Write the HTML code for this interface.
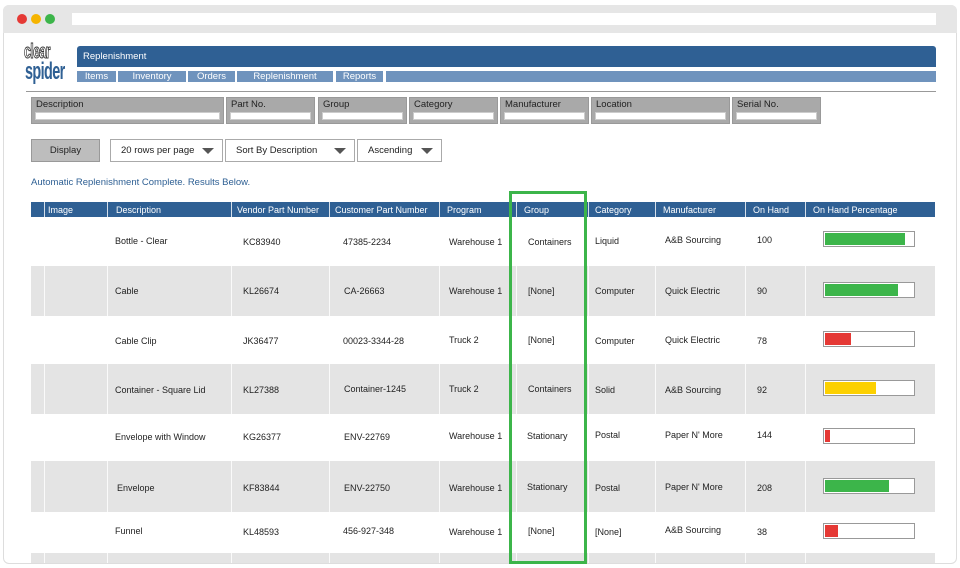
<!DOCTYPE html><html><head><meta charset="utf-8"><style>
*{margin:0;padding:0;box-sizing:border-box}
body{width:960px;height:568px;background:#fff;font-family:"Liberation Sans",sans-serif;position:relative;overflow:hidden;color:#222}
.a{position:absolute}
.frame{left:3px;top:5px;width:954px;height:559px;border:1px solid #ddd;border-radius:6px;background:#fff}
.tb{left:3px;top:5px;width:954px;height:28px;background:#e6e6e6;border-radius:6px 6px 0 0}
.dot{width:10px;height:10px;border-radius:50%;top:14px}
.nav{top:71px;height:11px;background:#6f93bd;color:#fff;font-size:9.5px;line-height:11px;text-align:center}
.fb{top:97px;height:27px;background:#a9a9a9;border:1px solid #999;font-size:9.5px;padding-left:4px;line-height:13px}
.fb i{position:absolute;left:3px;right:3px;top:14px;height:8px;background:#fff;border:1px solid #ccc}
.sel{top:139px;height:23px;border:1px solid #aaa;background:#fff;font-size:9.5px;line-height:21px;padding-left:10px}
.sel b{position:absolute;right:8px;top:8px;width:0;height:0;border-left:6px solid transparent;border-right:6px solid transparent;border-top:6px solid #555}
.th{top:202px;height:15px;background:#2f6094;color:#fff;font-size:9.5px;line-height:15px}
.row{left:31px;width:904px}
.g{background:#e4e4e4}
.vl{top:202px;height:361px;width:1px;background:rgba(255,255,255,.8)}
.t{font-size:9px;white-space:nowrap}
.bar{left:823px;width:92px;height:16px;border:1px solid #999;background:#fff}
.bar i{position:absolute;left:1px;top:1px;bottom:1px}
</style></head><body>
<div class="a frame"></div><div class="a tb"></div>
<div class="a dot" style="left:17px;background:#e53935"></div>
<div class="a dot" style="left:31px;background:#f5b400"></div>
<div class="a dot" style="left:45px;background:#3cb54a"></div>
<div class="a" style="left:72px;top:13px;width:864px;height:12px;background:#fff"></div>
<div class="a" style="left:24px;top:42px;font:bold 20px/20px 'Liberation Sans',sans-serif;color:#fff;-webkit-text-stroke:1px #333;letter-spacing:-1px;transform:scale(.62,1);transform-origin:left top">clear</div>
<div class="a" style="left:25px;top:61px;font:bold 24px/22px 'Liberation Sans',sans-serif;color:#2f6094;letter-spacing:-1px;transform:scale(.6,1);transform-origin:left top">spider</div>
<div class="a" style="left:77px;top:46px;width:859px;height:21px;background:#2f6094;border-radius:3px 3px 0 0;color:#fff;font-size:9.5px;line-height:21px;padding-left:6px">Replenishment</div>
<div class="a nav" style="left:77px;width:39px">Items</div>
<div class="a nav" style="left:118px;width:68px">Inventory</div>
<div class="a nav" style="left:188px;width:47px">Orders</div>
<div class="a nav" style="left:237px;width:96px">Replenishment</div>
<div class="a nav" style="left:336px;width:47px">Reports</div>
<div class="a nav" style="left:386px;width:550px"></div>
<div class="a" style="left:26px;top:91px;width:910px;height:1px;background:#999"></div>
<div class="a fb" style="left:31px;width:193px">Description<i></i></div>
<div class="a fb" style="left:226px;width:89px">Part No.<i></i></div>
<div class="a fb" style="left:318px;width:89px">Group<i></i></div>
<div class="a fb" style="left:409px;width:89px">Category<i></i></div>
<div class="a fb" style="left:500px;width:89px">Manufacturer<i></i></div>
<div class="a fb" style="left:591px;width:139px">Location<i></i></div>
<div class="a fb" style="left:732px;width:89px">Serial No.<i></i></div>
<div class="a" style="left:31px;top:139px;width:69px;height:23px;background:#bdbdbd;border:1px solid #999;font-size:9.5px;line-height:21px;text-align:center">Display</div>
<div class="a sel" style="left:110px;width:113px">20 rows per page<b></b></div>
<div class="a sel" style="left:225px;width:130px">Sort By Description<b></b></div>
<div class="a sel" style="left:357px;width:85px">Ascending<b></b></div>
<div class="a" style="left:31px;top:177px;font-size:9.5px;color:#2f6094">Automatic Replenishment Complete. Results Below.</div>
<div class="a th row"></div>
<div class="a row g" style="top:266px;height:50px"></div>
<div class="a row g" style="top:364px;height:50px"></div>
<div class="a row g" style="top:461px;height:51px"></div>
<div class="a row g" style="top:553px;height:10px"></div>
<div class="a vl" style="left:44px"></div><div class="a vl" style="left:107px"></div><div class="a vl" style="left:231px"></div><div class="a vl" style="left:329px"></div><div class="a vl" style="left:439px"></div><div class="a vl" style="left:516px"></div><div class="a vl" style="left:588px"></div><div class="a vl" style="left:655px"></div><div class="a vl" style="left:745px"></div><div class="a vl" style="left:805px"></div>
<div class="a t" style="top:205px;left:48px;color:#fff">Image</div>
<div class="a t" style="top:205px;left:116px;color:#fff">Description</div>
<div class="a t" style="top:205px;left:237px;color:#fff">Vendor Part Number</div>
<div class="a t" style="top:205px;left:335px;color:#fff">Customer Part Number</div>
<div class="a t" style="top:205px;left:447px;color:#fff">Program</div>
<div class="a t" style="top:205px;left:524px;color:#fff">Group</div>
<div class="a t" style="top:205px;left:595px;color:#fff">Category</div>
<div class="a t" style="top:205px;left:663px;color:#fff">Manufacturer</div>
<div class="a t" style="top:205px;left:753px;color:#fff">On Hand</div>
<div class="a t" style="top:205px;left:813px;color:#fff">On Hand Percentage</div>

<div class="a t" style="top:236px;left:115px">Bottle - Clear</div><div class="a t" style="top:237px;left:243px">KC83940</div><div class="a t" style="top:237px;left:343px">47385-2234</div><div class="a t" style="top:237px;left:449px">Warehouse 1</div><div class="a t" style="top:237px;left:528px">Containers</div><div class="a t" style="top:236px;left:595px">Liquid</div><div class="a t" style="top:235px;left:665px">A&amp;B Sourcing</div><div class="a t" style="top:235px;left:757px">100</div><div class="a bar" style="top:231px"><i style="width:80px;background:#3cb54a"></i></div>

<div class="a t" style="top:286px;left:115px">Cable</div><div class="a t" style="top:286px;left:243px">KL26674</div><div class="a t" style="top:286px;left:344px">CA-26663</div><div class="a t" style="top:286px;left:449px">Warehouse 1</div><div class="a t" style="top:286px;left:528px">[None]</div><div class="a t" style="top:286px;left:595px">Computer</div><div class="a t" style="top:286px;left:665px">Quick Electric</div><div class="a t" style="top:286px;left:757px">90</div><div class="a bar" style="top:282px"><i style="width:73px;background:#3cb54a"></i></div>

<div class="a t" style="top:336px;left:115px">Cable Clip</div><div class="a t" style="top:336px;left:243px">JK36477</div><div class="a t" style="top:336px;left:343px">00023-3344-28</div><div class="a t" style="top:335px;left:449px">Truck 2</div><div class="a t" style="top:335px;left:528px">[None]</div><div class="a t" style="top:336px;left:595px">Computer</div><div class="a t" style="top:335px;left:665px">Quick Electric</div><div class="a t" style="top:336px;left:757px">78</div><div class="a bar" style="top:331px"><i style="width:26px;background:#e53935"></i></div>

<div class="a t" style="top:385px;left:115px">Container - Square Lid</div><div class="a t" style="top:385px;left:243px">KL27388</div><div class="a t" style="top:384px;left:344px">Container-1245</div><div class="a t" style="top:384px;left:449px">Truck 2</div><div class="a t" style="top:384px;left:528px">Containers</div><div class="a t" style="top:385px;left:595px">Solid</div><div class="a t" style="top:385px;left:665px">A&amp;B Sourcing</div><div class="a t" style="top:385px;left:757px">92</div><div class="a bar" style="top:380px"><i style="width:51px;background:#fcd000"></i></div>

<div class="a t" style="top:432px;left:115px">Envelope with Window</div><div class="a t" style="top:432px;left:243px">KG26377</div><div class="a t" style="top:432px;left:344px">ENV-22769</div><div class="a t" style="top:431px;left:449px">Warehouse 1</div><div class="a t" style="top:431px;left:527px">Stationary</div><div class="a t" style="top:430px;left:595px">Postal</div><div class="a t" style="top:430px;left:665px">Paper N' More</div><div class="a t" style="top:430px;left:757px">144</div><div class="a bar" style="top:428px"><i style="width:5px;background:#e53935"></i></div>

<div class="a t" style="top:483px;left:117px">Envelope</div><div class="a t" style="top:483px;left:243px">KF83844</div><div class="a t" style="top:483px;left:344px">ENV-22750</div><div class="a t" style="top:483px;left:449px">Warehouse 1</div><div class="a t" style="top:482px;left:527px">Stationary</div><div class="a t" style="top:483px;left:595px">Postal</div><div class="a t" style="top:482px;left:665px">Paper N' More</div><div class="a t" style="top:483px;left:757px">208</div><div class="a bar" style="top:478px"><i style="width:64px;background:#3cb54a"></i></div>

<div class="a t" style="top:526px;left:115px">Funnel</div><div class="a t" style="top:527px;left:243px">KL48593</div><div class="a t" style="top:526px;left:343px">456-927-348</div><div class="a t" style="top:527px;left:449px">Warehouse 1</div><div class="a t" style="top:526px;left:528px">[None]</div><div class="a t" style="top:527px;left:595px">[None]</div><div class="a t" style="top:525px;left:665px">A&amp;B Sourcing</div><div class="a t" style="top:527px;left:757px">38</div><div class="a bar" style="top:523px"><i style="width:13px;background:#e53935"></i></div>

<div class="a" style="left:509px;top:191px;width:78px;height:373px;border:3px solid #3cb54a"></div>
</body></html>
